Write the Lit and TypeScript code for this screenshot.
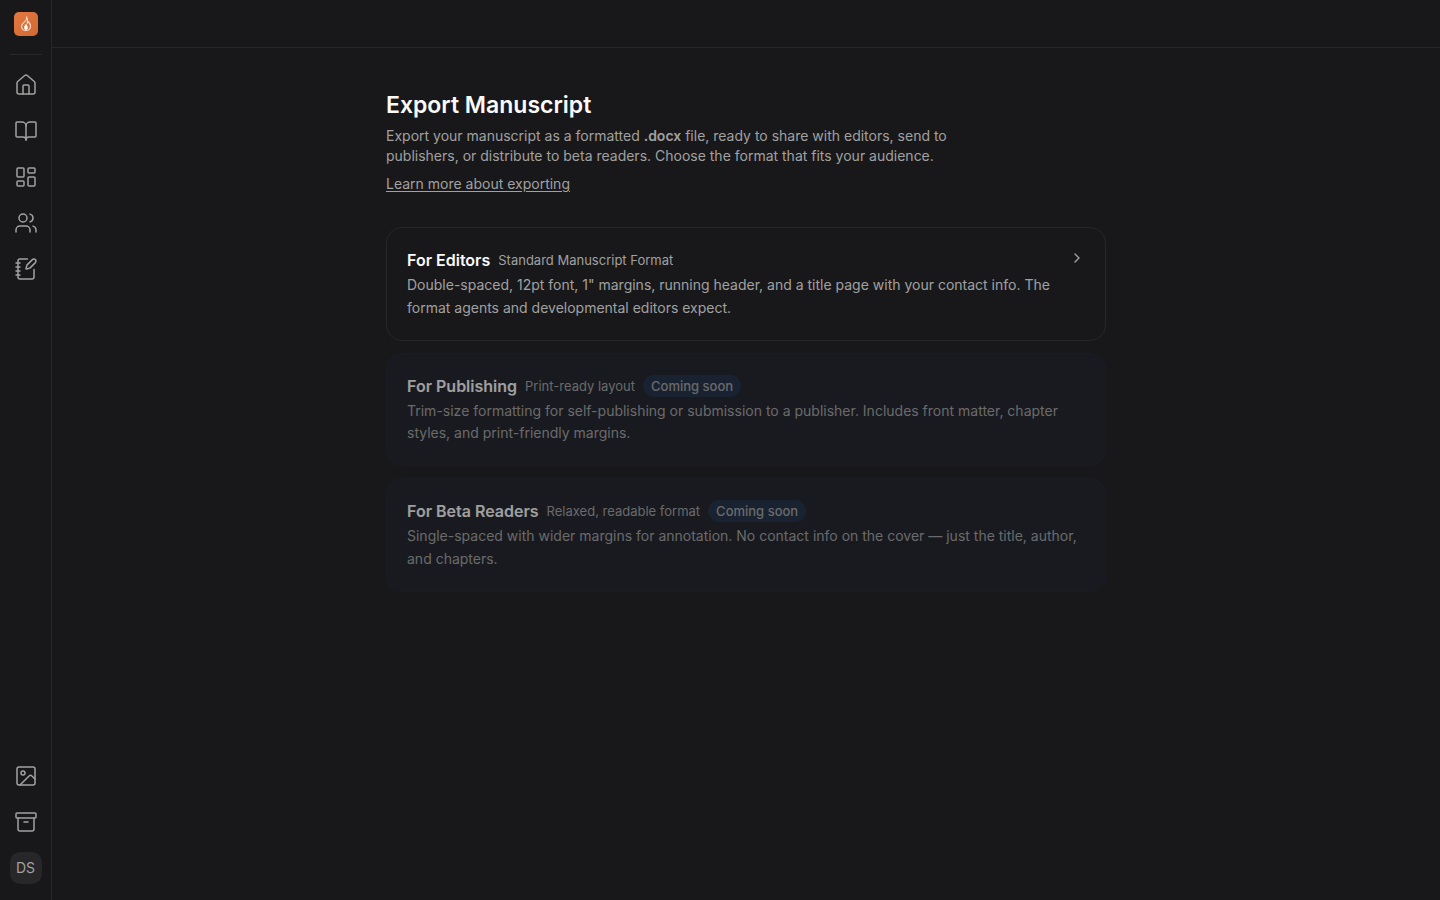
import { LitElement, html, css, svg, nothing } from "lit";
import { customElement, property } from "lit/decorators.js";

const ICONS: Record<string, unknown> = {
  home: svg`<path d="M15 21v-8a1 1 0 0 0-1-1h-4a1 1 0 0 0-1 1v8"/><path d="M3 10a2 2 0 0 1 .709-1.528l7-5.999a2 2 0 0 1 2.582 0l7 5.999A2 2 0 0 1 21 10v9a2 2 0 0 1-2 2H5a2 2 0 0 1-2-2z"/>`,
  book: svg`<path d="M12 7v14"/><path d="M3 18a1 1 0 0 1-1-1V4a1 1 0 0 1 1-1h5a4 4 0 0 1 4 4 4 4 0 0 1 4-4h5a1 1 0 0 1 1 1v13a1 1 0 0 1-1 1h-6a3 3 0 0 0-3 3 3 3 0 0 0-3-3z"/>`,
  board: svg`<rect width="7" height="9" x="3" y="3" rx="1"/><rect width="7" height="5" x="14" y="3" rx="1"/><rect width="7" height="9" x="14" y="12" rx="1"/><rect width="7" height="5" x="3" y="16" rx="1"/>`,
  users: svg`<path d="M16 21v-2a4 4 0 0 0-4-4H6a4 4 0 0 0-4 4v2"/><path d="M16 3.128a4 4 0 0 1 0 7.744"/><path d="M22 21v-2a4 4 0 0 0-3-3.87"/><circle cx="9" cy="7" r="4"/>`,
  notes: svg`<path d="M13.4 2H6a2 2 0 0 0-2 2v16a2 2 0 0 0 2 2h12a2 2 0 0 0 2-2v-7.4"/><path d="M2 6h4"/><path d="M2 10h4"/><path d="M2 14h4"/><path d="M2 18h4"/><path d="M21.378 5.626a1 1 0 1 0-3.004-3.004l-5.01 5.012a2 2 0 0 0-.506.854l-.837 2.87a.5.5 0 0 0 .62.62l2.87-.837a2 2 0 0 0 .854-.506z"/>`,
  image: svg`<rect width="18" height="18" x="3" y="3" rx="2"/><circle cx="9" cy="9" r="2"/><path d="m21 15-3.086-3.086a2 2 0 0 0-2.828 0L6 21"/>`,
  archive: svg`<rect width="20" height="5" x="2" y="3" rx="1"/><path d="M4 8v11a2 2 0 0 0 2 2h12a2 2 0 0 0 2-2V8"/><path d="M10 12h4"/>`,
};

@customElement("side-link")
export class SideLink extends LitElement {
  @property() icon = "home";
  @property() label = "";

  static styles = css`
    :host { display: block; }
    .link {
      display: grid;
      place-items: center;
      width: 40px;
      height: 40px;
      border-radius: 8px;
      color: #a1a1a1;
    }
    .link:hover { background: #27272a; }
    .glyph { display: block; width: 24px; height: 24px; }
  `;

  render() {
    return html`<a class="link" href="#${this.icon}" aria-label=${this.label}>
      <svg class="glyph" viewBox="0 0 24 24" fill="none" stroke="currentColor" stroke-width="1.5"
        stroke-linecap="round" stroke-linejoin="round" aria-hidden="true">${ICONS[this.icon]}</svg>
    </a>`;
  }
}

@customElement("export-card")
export class ExportCard extends LitElement {
  @property() heading = "";
  @property() format = "";
  @property() text = "";
  @property({ type: Boolean }) soon = false;

  static styles = css`
    :host { display: block; }
    .card {
      display: flex;
      align-items: flex-start;
      gap: 16px;
      box-sizing: border-box;
      width: 100%;
      margin: 0;
      padding: 20px;
      border: 1px solid #27272a;
      border-radius: 16px;
      background: #18181a;
      color: #a1a1a1;
      font: inherit;
      text-align: left;
      cursor: pointer;
    }
    .card:disabled {
      border-color: #1a202a;
      background: #191c24;
      opacity: 0.6;
      cursor: default;
    }
    .body { display: block; flex: 1; min-width: 0; }
    .head { display: flex; align-items: center; gap: 8px; height: 24px; }
    .title { color: #fafafa; font-size: 16px; font-weight: 600; line-height: 24px; }
    .format { font-size: 13px; line-height: 20px; }
    .badge {
      padding: 0 8px;
      border-radius: 12px;
      background: #1a2a3f;
      font-size: 13px;
      font-weight: 500;
      line-height: 22px;
    }
    .text { display: block; margin-top: 2px; font-size: 14px; line-height: 1.625; }
    .arrow { display: block; width: 16px; height: 16px; margin-top: 2px; }
  `;

  render() {
    return html`<button class="card" type="button" ?disabled=${this.soon}>
      <span class="body">
        <span class="head">
          <span class="title">${this.heading}</span>
          <span class="format">${this.format}</span>
          ${this.soon ? html`<span class="badge">Coming soon</span>` : nothing}
        </span>
        <span class="text">${this.text}</span>
      </span>
      ${this.soon
        ? nothing
        : html`<svg class="arrow" viewBox="0 0 24 24" fill="none" stroke="currentColor" stroke-width="2"
            stroke-linecap="round" stroke-linejoin="round" aria-hidden="true"><path d="m9 18 6-6-6-6"/></svg>`}
    </button>`;
  }
}

@customElement("app-root")
export class AppRoot extends LitElement {
  static styles = css`
    :host {
      display: flex;
      min-height: 100vh;
      background: #18181a;
      color: #a1a1a1;
      font-family: Inter, "Liberation Sans", sans-serif;
      font-size: 14px;
      line-height: 20px;
    }
    .rail {
      display: flex;
      flex-direction: column;
      align-items: center;
      box-sizing: border-box;
      width: 52px;
      padding: 12px 0 16px;
      border-right: 1px solid #27272a;
    }
    .logo { display: block; width: 24px; height: 24px; }
    .mark { display: block; }
    .rule { width: 32px; height: 1px; margin: 18px 0 10px; border: 0; background: #27272a; }
    .group { display: flex; flex-direction: column; gap: 6px; }
    .bottom { margin-top: auto; }
    .avatar {
      width: 32px;
      height: 32px;
      margin-top: 10px;
      padding: 0;
      border: 0;
      border-radius: 10px;
      background: #27272a;
      color: #a1a1a1;
      font: inherit;
    }
    .page { display: flex; flex: 1; flex-direction: column; min-width: 0; }
    .topbar { height: 47px; border-bottom: 1px solid #27272a; }
    .content { box-sizing: border-box; width: 100%; max-width: 768px; margin: 0 auto; padding: 40px 24px; }
    .title { margin: 0; color: #fafafa; font-size: 23px; font-weight: 600; line-height: 34px; }
    .intro { max-width: 576px; margin: 4px 0 8px; }
    .strong { font-weight: 600; }
    .more { color: inherit; text-underline-offset: 2px; }
    .cards { display: flex; flex-direction: column; gap: 12px; margin-top: 33px; }
  `;

  render() {
    return html`
      <nav class="rail" aria-label="Main">
        <a class="logo" href="#top" aria-label="Start">
          <svg class="mark" width="24" height="24" viewBox="0 0 24 24" aria-hidden="true">
            <defs><linearGradient id="ember" x1="0" y1="0" x2="1" y2="1">
              <stop offset="0" stop-color="#e5783f"/><stop offset="1" stop-color="#cf6a35"/>
            </linearGradient></defs>
            <rect width="24" height="24" rx="5" fill="url(#ember)"/>
            <path d="M12.600 4.900c.6 1.700.2 2.700-1.200 4C9 11 7.500 12 7.500 14.200c0 2.500 2 4.300 4.500 4.300s4.500-1.800 4.500-4.300c0-1.900-1-3.300-2.300-4.700-.1.900-.4 1.300-1 1.700.4-2.200.5-4.700-.6-6.300z"
              fill="none" stroke="#f7d9c8" stroke-width="1.200" stroke-linejoin="round"/>
            <path d="M12 11.800c-.8 1.200-1.800 2.100-1.800 3.700 0 1.400.8 2.300 1.800 2.300s1.800-.9 1.800-2.300c0-1.500-1-2.400-1.800-3.700z" fill="#fff"/>
          </svg>
        </a>
        <hr class="rule" />
        <div class="group">
          <side-link icon="home" label="Home"></side-link>
          <side-link icon="book" label="Manuscript"></side-link>
          <side-link icon="board" label="Board"></side-link>
          <side-link icon="users" label="Characters"></side-link>
          <side-link icon="notes" label="Notes"></side-link>
        </div>
        <div class="group bottom">
          <side-link icon="image" label="Images"></side-link>
          <side-link icon="archive" label="Archive"></side-link>
        </div>
        <button class="avatar" type="button">DS</button>
      </nav>
      <div class="page">
        <header class="topbar"></header>
        <main class="content">
          <h1 class="title">Export Manuscript</h1>
          <p class="intro">Export your manuscript as a formatted <strong class="strong">.docx</strong> file, ready to share with editors, send to publishers, or distribute to beta readers. Choose the format that fits your audience.</p>
          <a class="more" href="#exporting">Learn more about exporting</a>
          <div class="cards">
            <export-card heading="For Editors" format="Standard Manuscript Format"
              text='Double-spaced, 12pt font, 1" margins, running header, and a title page with your contact info. The format agents and developmental editors expect.'></export-card>
            <export-card soon heading="For Publishing" format="Print-ready layout"
              text="Trim-size formatting for self-publishing or submission to a publisher. Includes front matter, chapter styles, and print-friendly margins."></export-card>
            <export-card soon heading="For Beta Readers" format="Relaxed, readable format"
              text="Single-spaced with wider margins for annotation. No contact info on the cover — just the title, author, and chapters."></export-card>
          </div>
        </main>
      </div>
    `;
  }
}
